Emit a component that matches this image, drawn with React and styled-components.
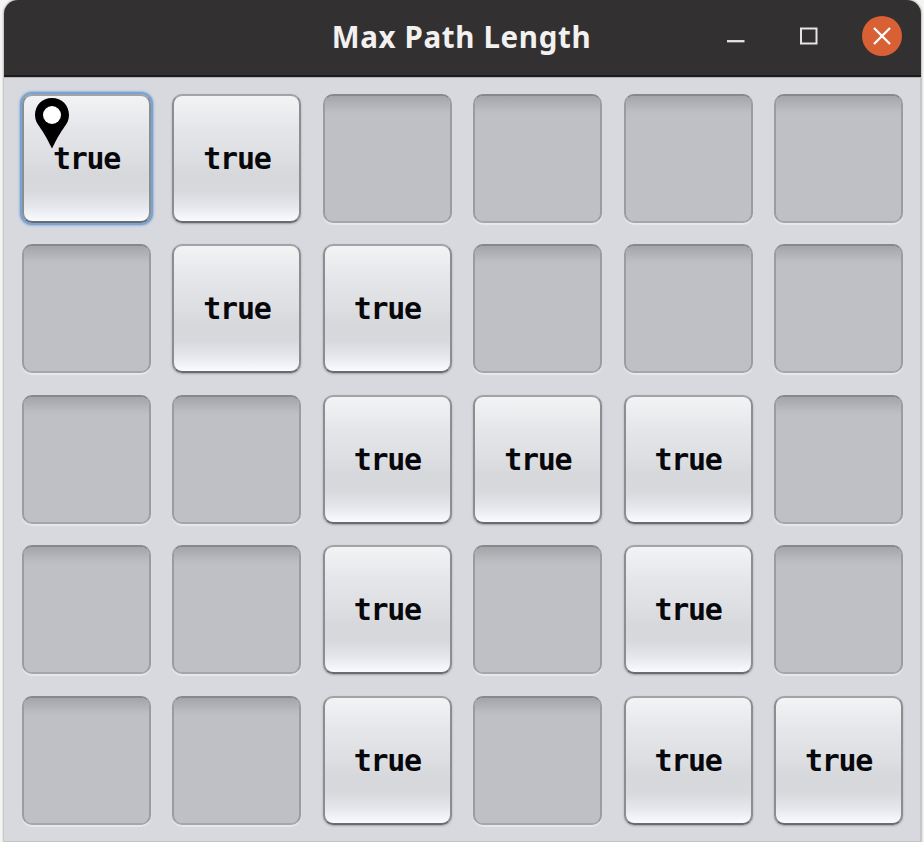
import React from "react";
import styled, { createGlobalStyle, css } from "styled-components";

const GlobalStyle = createGlobalStyle`
  * { box-sizing: border-box; }
  body { margin: 0; background: #f5f5f4; overflow: hidden; }
`;

const Window = styled.main`
  width: 917px;
  height: 842px;
  margin-left: 4px;
  display: flex;
  flex-direction: column;
  border-radius: 14px 14px 0 0;
  background: #d7d9de;
  overflow: hidden;
  box-shadow: 0 0 2px 1px #b9b9b9;
`;

const TitleBar = styled.header`
  flex: none;
  height: 77px;
  display: grid;
  grid-template-columns: 1fr 260px 1fr;
  align-items: center;
  background: #323030;
  border-bottom: 2px solid #1d1b1c;
  box-shadow: 0 1px 0 #b3b4b7;
`;

const Title = styled.h1`
  grid-column: 2;
  margin: 0 0 1px -2px;
  font: 700 29.5px/40px "Noto Sans", sans-serif;
  letter-spacing: 0.65px;
  white-space: nowrap;
  text-align: center;
  color: #f2f1f0;
`;

const Controls = styled.div`
  display: flex;
  justify-content: flex-end;
  align-items: center;
  gap: 33px;
  padding: 0 19px 3px 0;
`;

const ControlButton = styled.button`
  width: 40px;
  height: 40px;
  padding: 0;
  border: 0;
  border-radius: 50%;
  background: ${({ $close }) => ($close ? "#d95f34" : "transparent")};

  svg { display: block; }
`;

const Board = styled.section`
  flex: 1;
  display: grid;
  grid-template-columns: repeat(6, 129px);
  grid-auto-rows: 129px;
  gap: 21.4px;
  padding: 17px 0 0 18px;
  border: solid #c3c4c7;
  border-width: 0 1px 1px 0;
`;

const raised = css`
  border: 2px solid;
  border-color: #a1a4a7 #8b8e91 #696b6e #8b8e91;
  background: linear-gradient(#f2f3f5 0%, #e4e5e8 28%, #dddfe3 48%, #d6d8dc 62%, #d7d9dd 76%, #e6e8ee 89%, #fafbff 100%) padding-box;
  box-shadow: ${({ $focused }) =>
    $focused
      ? "0 0 0 2px #7ba2d0, 0 0 2px 3px #9db9db"
      : "0 1px 2px #a0a2a6"};
`;

const sunken = css`
  border: 2px solid;
  border-color: #87888b #9b9ca0 #a5a6aa #9b9ca0;
  background: linear-gradient(#a4a5a9 0, #afb0b4 7px, #bbbcc1 14px, #bfc0c5 19px) padding-box;
  box-shadow: 0 2px 1px #e7e8eb;
`;

const Tile = styled.button`
  position: relative;
  display: flex;
  align-items: center;
  justify-content: center;
  padding: 1px 0 0;
  border-radius: 10px;
  color: #08080c;
  font: 700 30px/32px "DejaVu Sans Mono", monospace;
  letter-spacing: -1.3px;
  ${({ $open }) => ($open ? raised : sunken)}
`;

const Pin = styled.svg`
  position: absolute;
  left: 10px;
  top: 1px;
`;

const grid = ["110000", "011000", "001110", "001010", "001011"];

export default function App() {
  return (
    <>
      <GlobalStyle />
      <Window>
        <TitleBar>
          <Title>Max Path Length</Title>
          <Controls>
            <ControlButton aria-label="Minimize">
              <svg width="40" height="40">
                <path d="M11 25.2h17.5" stroke="#e6e5e4" strokeWidth="2.3" />
              </svg>
            </ControlButton>
            <ControlButton aria-label="Maximize">
              <svg width="40" height="40" fill="none">
                <rect x="12" y="12.5" width="15.5" height="15" stroke="#e6e5e4" strokeWidth="2" />
              </svg>
            </ControlButton>
            <ControlButton $close aria-label="Close">
              <svg width="40" height="40">
                <path d="M12 12l16 16M28 12L12 28" stroke="#fff" strokeWidth="2.3" />
              </svg>
            </ControlButton>
          </Controls>
        </TitleBar>
        <Board>
          {grid.flatMap((row, y) =>
            [...row].map((cell, x) => (
              <Tile key={`${x}-${y}`} $open={cell === "1"} $focused={x + y === 0}>
                {cell === "1" && "true"}
                {x + y === 0 && (
                  <Pin width="36" height="52" viewBox="0 0 36 52" aria-label="Start">
                    <path
                      fill="#000"
                      d="M18 1C8.3 1 1 8.3 1 18c0 5 2 8.5 5 12.5C9.500 35.500 12.500 40.500 18 51.500c5.500-11 8.500-16 12-21 3-4 5-7.500 5-12.500C35 8.300 27.700 1 18 1z"
                    />
                    <circle cx="18" cy="18" r="9" fill="#fff" />
                  </Pin>
                )}
              </Tile>
            ))
          )}
        </Board>
      </Window>
    </>
  );
}
